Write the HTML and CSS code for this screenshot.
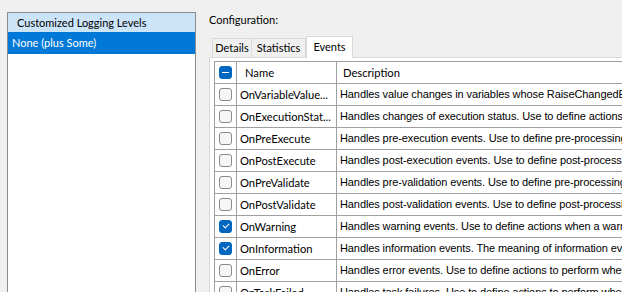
FILE: index.html
```html
<!DOCTYPE html>
<html>
<head>
<meta charset="utf-8">
<link rel="stylesheet" href="styles.css">
</head>
<body>
<div class="window">
  <div class="levels">
    <div class="levels-head">Customized Logging Levels</div>
    <div class="levels-item selected">None (plus Some)</div>
  </div>
  <div class="config">
    <div class="config-label">Configuration:</div>
    <div class="tabs">
      <div class="tab tab-details">Details</div>
      <div class="tab tab-stats">Statistics</div>
      <div class="tab tab-events active">Events</div>
    </div>
    <div class="tab-page">
      <div class="grid">
        <div class="cell check head"><span class="box mixed"></span></div>
        <div class="cell name head">Name</div>
        <div class="cell desc head">Description</div>

        <div class="cell check"><span class="box"></span></div>
        <div class="cell name">OnVariableValue...</div>
        <div class="cell desc">Handles value changes in variables whose RaiseChangedEvent property is set to true.</div>

        <div class="cell check"><span class="box"></span></div>
        <div class="cell name">OnExecutionStat...</div>
        <div class="cell desc">Handles changes of execution status. Use to define actions to perform when the status changes.</div>

        <div class="cell check"><span class="box"></span></div>
        <div class="cell name">OnPreExecute</div>
        <div class="cell desc">Handles pre-execution events. Use to define pre-processing tasks.</div>

        <div class="cell check"><span class="box"></span></div>
        <div class="cell name">OnPostExecute</div>
        <div class="cell desc">Handles post-execution events. Use to define post-processing tasks.</div>

        <div class="cell check"><span class="box"></span></div>
        <div class="cell name">OnPreValidate</div>
        <div class="cell desc">Handles pre-validation events. Use to define pre-processing tasks.</div>

        <div class="cell check"><span class="box"></span></div>
        <div class="cell name">OnPostValidate</div>
        <div class="cell desc">Handles post-validation events. Use to define post-processing tasks.</div>

        <div class="cell check"><span class="box checked"></span></div>
        <div class="cell name">OnWarning</div>
        <div class="cell desc">Handles warning events. Use to define actions when a warning occurs.</div>

        <div class="cell check"><span class="box checked"></span></div>
        <div class="cell name">OnInformation</div>
        <div class="cell desc">Handles information events. The meaning of information events is task-defined.</div>

        <div class="cell check"><span class="box"></span></div>
        <div class="cell name">OnError</div>
        <div class="cell desc">Handles error events. Use to define actions to perform when an error occurs.</div>

        <div class="cell check"><span class="box"></span></div>
        <div class="cell name">OnTaskFailed</div>
        <div class="cell desc">Handles task failures. Use to define actions to perform when a task fails.</div>
      </div>
    </div>
  </div>
</div>
</body>
</html>
```

FILE: styles.css
```css
* { box-sizing: border-box; }
html, body {
  margin: 0;
  padding: 0;
  background: #f0f0f0;
  width: 622px;
  height: 292px;
  overflow: hidden;
}
body {
  font-family: Lato, "Noto Sans", sans-serif;
  font-size: 11px;
  color: #000;
}
.window {
  display: flex;
  align-items: flex-start;
  height: 292px;
}
.levels {
  flex: 0 0 189px;
  margin: 12px 0 0 7px;
  height: 300px;
  background: #fff;
  border: 1px solid #8c8c8c;
}
.levels-head {
  height: 19px;
  line-height: 19px;
  padding-left: 9px;
  background: #cce4f7;
  white-space: nowrap;
}
.levels-item {
  height: 22px;
  line-height: 21px;
  padding-left: 4px;
  white-space: nowrap;
}
.levels-item.selected {
  background: #0078d7;
  color: #fff;
}
.config {
  flex: 0 0 auto;
  width: 413px;
  margin-left: 13px;
  display: flex;
  flex-direction: column;
}
.config-label {
  padding-top: 13px;
  height: 37px;
  line-height: 14px;
  white-space: nowrap;
}
.tabs {
  display: flex;
  align-items: flex-end;
  height: 21px;
  padding-left: 3px;
  margin-top: -1px;
}
.tab {
  height: 19px;
  line-height: 18px;
  text-align: center;
  border: 1px solid #d9d9d9;
  border-bottom: none;
  background: #f0f0f0;
  white-space: nowrap;
}
.tab + .tab { border-left: none; }
.tab-details { width: 40px; }
.tab-stats { width: 54px; }
.tab-events { width: 47px; }
.tab.active {
  height: 22px;
  line-height: 20px;
  margin-bottom: -1px;
  background: #fff;
  border-left: 1px solid #d9d9d9;
  position: relative;
  z-index: 1;
}
.tab-page {
  background: #fff;
  border: 1px solid #d9d9d9;
  border-right: none;
  padding: 3px 0 0 4px;
  height: 260px;
  overflow: hidden;
}
.grid {
  display: grid;
  grid-template-columns: 22px 100px 420px;
  grid-auto-rows: 22px;
  border-top: 1px solid #a0a0a0;
  border-left: 1px solid #a0a0a0;
  width: 543px;
}
.cell {
  border-right: 1px solid #a0a0a0;
  border-bottom: 1px solid #a0a0a0;
  white-space: nowrap;
  overflow: hidden;
  line-height: 21px;
}
.cell.name { padding-left: 3px; font-size: 11.2px; }
.cell.desc {
  padding-left: 3px;
  font-family: "Liberation Sans", Arial, sans-serif;
  font-size: 11px;
  letter-spacing: -0.1px;
}
.cell.name.head { padding-left: 8px; }
.cell.desc.head {
  padding-left: 6px;
  font-family: Lato, "Noto Sans", sans-serif;
  font-size: 11.2px;
  letter-spacing: 0;
}
.cell.check {
  display: flex;
  align-items: center;
  justify-content: center;
}
.box {
  width: 13px;
  height: 13px;
  border: 1px solid #8a8a8a;
  border-radius: 3px;
  background: #f6f6f6;
  position: relative;
}
.box.checked, .box.mixed {
  background: #0067c0;
  border-color: #0067c0;
}
.box.mixed::after {
  content: "";
  position: absolute;
  left: 2px;
  top: 5px;
  width: 7px;
  height: 1px;
  background: #fff;
}
.box.checked::after {
  content: "";
  position: absolute;
  left: 3px;
  top: 2px;
  width: 5px;
  height: 3px;
  border-left: 1px solid #fff;
  border-bottom: 1px solid #fff;
  transform: rotate(-45deg);
  transform-origin: center;
}
```
